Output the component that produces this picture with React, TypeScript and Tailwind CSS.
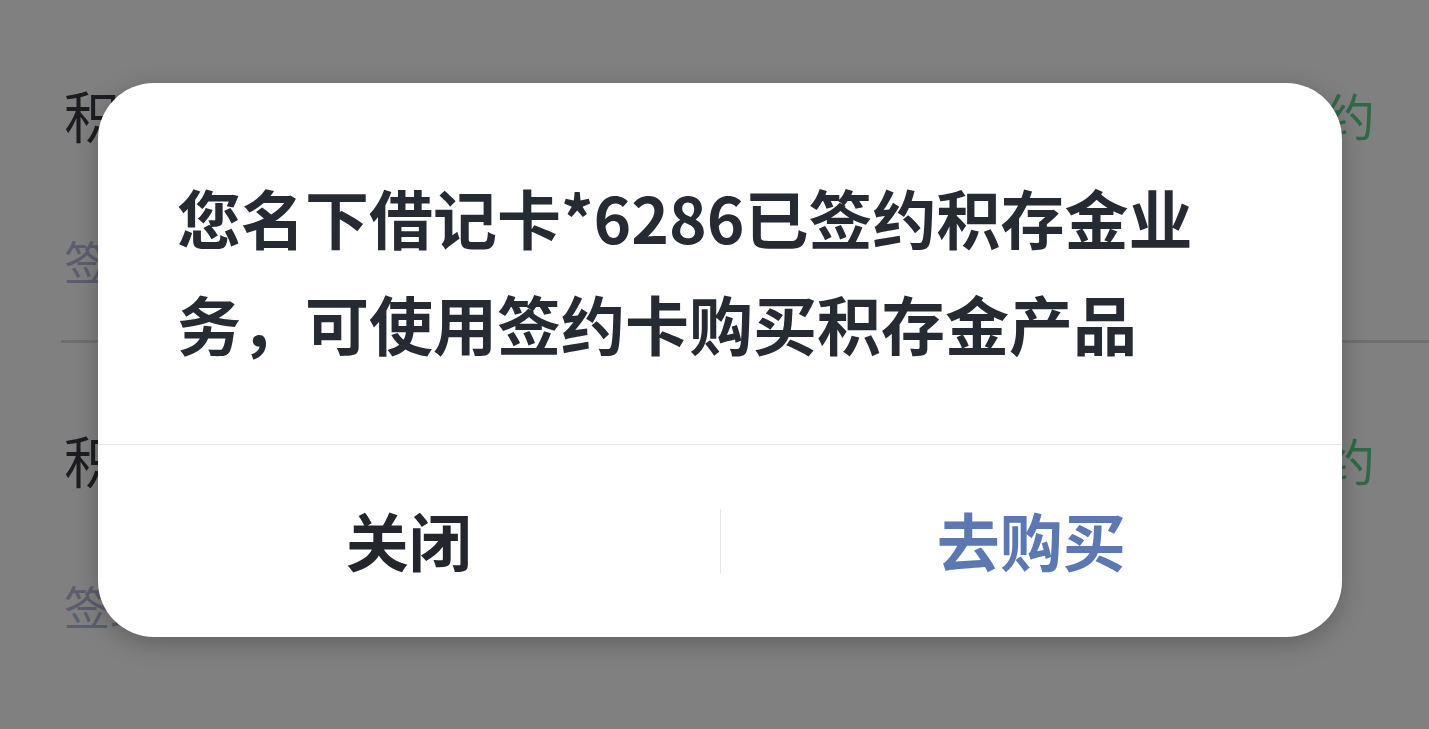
import React from "react";

const font = { fontFamily: '"Noto Sans CJK SC", "Noto Sans", sans-serif' };

function Row({ last }: { last?: boolean }) {
  return (
    <div className="relative h-[345px] pl-[64px] pr-[54px]">
      <div className="flex items-start justify-between pt-[82px]">
        <div className="text-[56px] leading-[64px] text-[#1c1d22]">积存金</div>
        <div className="text-[50px] leading-[64px] text-[#2f6a47]">已签约</div>
      </div>
      <div className="mt-[86px] text-[46px] leading-[56px] text-[#5c5d6e]">签约卡</div>
      {!last && <div className="absolute bottom-[2px] left-[61px] right-0 h-[3px] bg-[#6f6f6f]" />}
    </div>
  );
}

export default function App() {
  return (
    <div className="relative h-[729px] w-[1429px] overflow-hidden bg-[#808080]" style={font}>
      <div className="flex flex-col">
        <Row />
        <Row last />
      </div>
      <div className="absolute left-[98px] top-[83px] flex h-[554px] w-[1244px] flex-col rounded-[56px] bg-white shadow-[0_6px_24px_rgba(0,0,0,0.25)]">
        <div className="h-[361px] pl-[79px] pt-[80px]">
          <p className="w-[1040px] text-[64px] font-bold leading-[106px] text-[#262a33]">
            您名下借记卡*6286已签约积存金业务，可使用签约卡购买积存金产品
          </p>
        </div>
        <div className="h-px bg-[#e6e6e6]" />
        <div className="flex flex-1 items-center">
          <div className="flex flex-1 items-center justify-center pb-[4px] text-[63px] font-bold text-[#23262d]">关闭</div>
          <div className="h-[65px] w-px bg-[#e6e6e6]" />
          <div className="flex flex-1 items-center justify-center pb-[4px] text-[63px] font-bold text-[#5b78b3]">去购买</div>
        </div>
      </div>
    </div>
  );
}
